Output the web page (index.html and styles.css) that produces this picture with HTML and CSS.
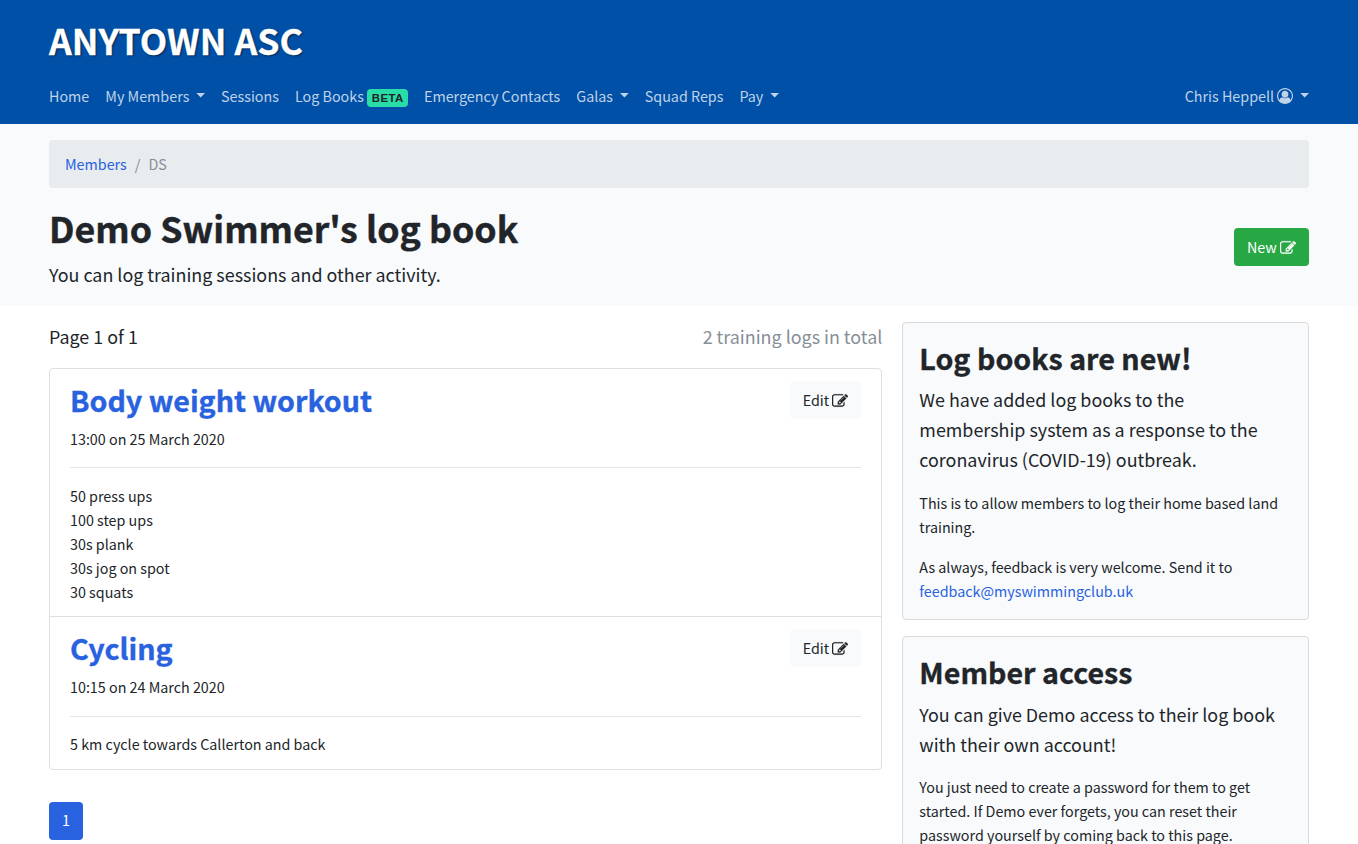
FILE: index.html
```html
<!DOCTYPE html>
<html lang="en">
<head>
<meta charset="utf-8">
<title>Demo Swimmer's log book</title>
<link rel="stylesheet" href="styles.css">
</head>
<body>
<svg class="sprite" aria-hidden="true">
  <symbol id="edit" viewBox="0 0 1792 1792"><path d="M888 1184l116-116-152-152-116 116v56h96v96h56zm440-720q-16-16-33 1l-350 350q-17 17-1 33t33-1l350-350q17-17 1-33zm80 594v190q0 119-84.5 203.5t-203.5 84.5h-832q-119 0-203.5-84.500t-84.500-203.500v-832q0-119 84.500-203.500t203.500-84.500h832q63 0 117 25 15 7 18 23 3 17-9 29l-49 49q-14 14-32 8-23-6-45-6h-832q-66 0-113 47t-47 113v832q0 66 47 113t113 47h832q66 0 113-47t47-113v-126q0-13 9-22l64-64q15-15 35-7t20 29zm-96-738l288 288-672 672h-288v-288zm444 132l-92 92-288-288 92-92q28-28 68-28t68 28l152 152q28 28 28 68t-28 68z"/></symbol>
  <symbol id="user" viewBox="0 0 1792 1792"><path d="M896 0q182 0 348 71t286 191 191 286 71 348q0 181-70.5 347t-190.500 286-286 191.500-349 71.500-349-71-285.500-191.500-190.500-286-71-347.500 71-348 191-286 286-191 348-71zm619 1351q149-205 149-455 0-156-61-298t-164-245-245-164-298-61-298 61-245 164-164 245-61 298q0 250 149 455 66-327 306-327 131 128 313 128t313-128q240 0 306 327zm-235-647q0-159-112.500-271.500t-271.500-112.500-271.500 112.500-112.500 271.500 112.500 271.500 271.500 112.500 271.500-112.500 112.500-271.500z"/></symbol>
</svg>
<header class="site-header">
  <div class="container">
    <h1 class="brand">ANYTOWN ASC</h1>
    <nav class="nav">
      <a class="nav-link">Home</a>
      <a class="nav-link caret">My Members </a>
      <a class="nav-link">Sessions</a>
      <a class="nav-link">Log Books <span class="badge">BETA</span></a>
      <a class="nav-link">Emergency Contacts</a>
      <a class="nav-link caret">Galas </a>
      <a class="nav-link">Squad Reps</a>
      <a class="nav-link caret">Pay </a>
      <a class="nav-link caret account">Chris Heppell <svg class="icon"><use href="#user"/></svg> </a>
    </nav>
  </div>
</header>
<section class="page-head">
  <div class="container">
    <nav class="breadcrumb"><a class="link">Members</a><span class="slash">/</span><span class="muted">DS</span></nav>
    <div class="title-row">
      <div>
        <h1 class="title">Demo Swimmer's log book</h1>
        <p class="lead">You can log training sessions and other activity.</p>
      </div>
      <a class="btn btn-new">New <svg class="icon icon-edit"><use href="#edit"/></svg></a>
    </div>
  </div>
</section>
<div class="container columns">
  <main>
    <div class="summary"><p class="lead">Page 1 of 1</p><p class="lead muted">2 training logs in total</p></div>
    <div class="list">
      <article class="item">
        <div class="item-head">
          <div><h2 class="heading link">Body weight workout</h2><p class="date">13:00 on 25 March 2020</p></div>
          <a class="btn btn-edit">Edit <svg class="icon icon-edit"><use href="#edit"/></svg></a>
        </div>
        <hr class="rule">
        <p class="log">50 press ups<br>100 step ups<br>30s plank<br>30s jog on spot<br>30 squats</p>
      </article>
      <article class="item">
        <div class="item-head">
          <div><h2 class="heading link">Cycling</h2><p class="date">10:15 on 24 March 2020</p></div>
          <a class="btn btn-edit">Edit <svg class="icon icon-edit"><use href="#edit"/></svg></a>
        </div>
        <hr class="rule">
        <p class="log">5 km cycle towards Callerton and back</p>
      </article>
    </div>
    <a class="page-link">1</a>
  </main>
  <aside>
    <div class="card">
      <h2 class="heading">Log books are new!</h2>
      <p class="lead">We have added log books to the membership system as a response to the coronavirus (COVID-19) outbreak.</p>
      <p class="text">This is to allow members to log their home based land training.</p>
      <p class="text">As always, feedback is very welcome. Send it to <a class="link">feedback@myswimmingclub.uk</a></p>
    </div>
    <div class="card">
      <h2 class="heading">Member access</h2>
      <p class="lead">You can give Demo access to their log book with their own account!</p>
      <p class="text">You just need to create a password for them to get started. If Demo ever forgets, you can reset their password yourself by coming back to this page.</p>
    </div>
  </aside>
</div>
</body>
</html>
```
FILE: styles.css
```css
* { box-sizing: border-box; }
html { overflow: hidden; }
body {
  margin: 0;
  height: 844px;
  overflow: hidden;
  background: #fff;
  color: #212529;
  font: 400 14.32px/24px "Noto Sans CJK JP", "Noto Sans", sans-serif;
}
h1, h2, p { margin: 0; }
.sprite { display: none; }
.container { width: 1260px; margin: 0 auto; }
.icon { width: 16px; height: 16px; fill: currentColor; vertical-align: -2px; }
.icon-edit { margin-bottom: -1px; stroke: currentColor; stroke-width: 20px; }
.link { color: #2962df; }
.muted { color: #868e96; }

.site-header { height: 124px; padding-top: 16px; background: #0050a8; }
.brand {
  color: #fff;
  font-size: 35.65px;
  line-height: 48px;
  text-shadow: 1px 1px 2px rgba(0, 0, 0, .6);
  -webkit-text-stroke: .3px currentColor;
}
.nav { display: flex; gap: 16px; margin-top: 20px; }
.nav-link { color: rgba(255, 255, 255, .75); white-space: pre; }
.caret::after {
  content: "";
  display: inline-block;
  width: 8.7px;
  height: 4.6px;
  margin-left: 3.8px;
  vertical-align: 4.4px;
  background: currentColor;
  clip-path: polygon(0 0, 100% 0, 50% 100%);
}
.account { margin-left: auto; }
.badge {
  display: inline-block;
  padding: 3px 4.3px 3px 4.7px;
  border-radius: 4px;
  background: #28dea6;
  color: #212529;
  font: 700 11.4px/12px "Liberation Sans", Arial, sans-serif;
  letter-spacing: .45px;
  vertical-align: 0;
}

.page-head { height: 182px; padding-top: 16px; background: #f8fafc; }
.breadcrumb {
  display: flex;
  gap: 8px;
  margin-bottom: 16px;
  padding: 12px 16px;
  border-radius: 4px;
  background: #e8ecee;
}
.slash { color: #868e96; }
.title-row { display: flex; align-items: center; justify-content: space-between; }
.title {
  margin-bottom: 9px;
  font-size: 35.72px;
  line-height: 47px;
  -webkit-text-stroke: .4px currentColor;
}
.lead { margin: -.8px 0 .8px; font-size: 17.9px; line-height: 30px; }
.btn { height: 38px; padding: 7px 13px; border-radius: 4px; white-space: nowrap; }
.btn-new { background: #28a745; color: #fff; }
.btn-edit { background: #f8fafc; }

.columns { display: grid; grid-template-columns: 833.33px 406.67px; gap: 20px; padding-top: 16px; }
.summary { display: flex; justify-content: space-between; margin-bottom: 16px; }
.list { margin-bottom: 32px; border: 1px solid #dfdfdf; border-radius: 4px; }
.item { padding: 12px 20px 12.4px; }
.item + .item { border-top: 1px solid #dfdfdf; }
.item-head { display: flex; align-items: flex-start; justify-content: space-between; min-height: 70.4px; }
.heading {
  margin-bottom: 8px;
  font-size: 28.64px;
  line-height: 38px;
  -webkit-text-stroke: .35px currentColor;
}
.rule { height: 1px; margin: 16px 0 15.6px; border: 0; background: #e5e5e5; }
.page-link {
  display: block;
  width: 34px;
  height: 38px;
  padding-top: 6.4px;
  border-radius: 4px;
  background: #2962df;
  color: #fff;
  text-align: center;
}
.card {
  margin-bottom: 16px;
  padding: 16px 16px .4px;
  border: 1px solid #d8dadc;
  border-radius: 4px;
  background: #f8fafc;
}
.card .heading { margin-bottom: 7.2px; }
.card .lead { margin: 0 0 16.8px; }
.text { margin-bottom: 16px; }
```
